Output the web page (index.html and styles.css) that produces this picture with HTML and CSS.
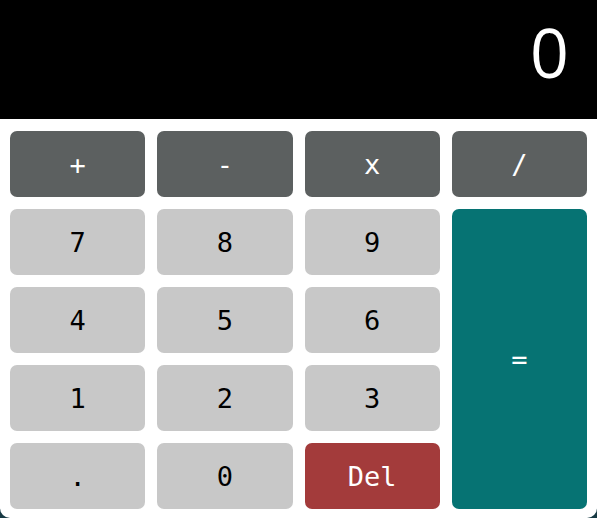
FILE: index.html
```html
<!DOCTYPE html>
<html>
<head>
<meta charset="utf-8">
<link rel="stylesheet" href="styles.css">
</head>
<body>
<div class="calc">
  <div class="display">0</div>
  <div class="keys">
    <button class="key op">+</button>
    <button class="key op">-</button>
    <button class="key op">x</button>
    <button class="key op">/</button>
    <button class="key num">7</button>
    <button class="key num">8</button>
    <button class="key num">9</button>
    <button class="key eq">=</button>
    <button class="key num">4</button>
    <button class="key num">5</button>
    <button class="key num">6</button>
    <button class="key num">1</button>
    <button class="key num">2</button>
    <button class="key num">3</button>
    <button class="key num">.</button>
    <button class="key num">0</button>
    <button class="key del">Del</button>
  </div>
</div>
</body>
</html>
```
FILE: styles.css
```css
html, body {
  margin: 0;
  padding: 0;
  background: #173a44;
  height: 100%;
  overflow: hidden;
}
.calc {
  width: 597px;
  height: 518px;
  background: #ffffff;
  border-radius: 0 0 10px 10px;
  overflow: hidden;
}
.display {
  height: 119px;
  box-sizing: border-box;
  background: #000000;
  color: #ffffff;
  font-family: "Open Sans", sans-serif;
  font-size: 68px;
  line-height: 1;
  text-align: right;
  padding: 18px 28px 0 0;
}
.keys {
  display: grid;
  grid-template-columns: repeat(4, 1fr);
  grid-template-rows: repeat(5, 66px);
  gap: 12px;
  padding: 12px 10px 9px 10px;
}
.key {
  border: none;
  border-radius: 7px;
  font-family: "DejaVu Sans Mono", monospace;
  font-size: 27px;
  padding: 0;
  margin: 0;
}
.op {
  background: #5c6060;
  color: #ffffff;
}
.num {
  background: #c8c8c8;
  color: #000000;
}
.del {
  background: #a33b3b;
  color: #ffffff;
}
.eq {
  grid-column: 4;
  grid-row: 2 / span 4;
  background: #067373;
  color: #ffffff;
}
```
